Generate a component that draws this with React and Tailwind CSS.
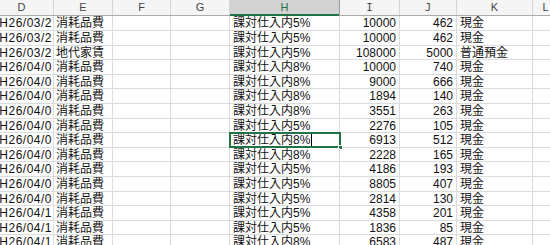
import { Fragment } from "react";

const rows = [
  ["H26/03/2", "消耗品費", "課対仕入内5%", "10000", "462", "現金"],
  ["H26/03/2", "消耗品費", "課対仕入内5%", "10000", "462", "現金"],
  ["H26/03/2", "地代家賃", "課対仕入内5%", "108000", "5000", "普通預金"],
  ["H26/04/0", "消耗品費", "課対仕入内8%", "10000", "740", "現金"],
  ["H26/04/0", "消耗品費", "課対仕入内8%", "9000", "666", "現金"],
  ["H26/04/0", "消耗品費", "課対仕入内8%", "1894", "140", "現金"],
  ["H26/04/0", "消耗品費", "課対仕入内8%", "3551", "263", "現金"],
  ["H26/04/0", "消耗品費", "課対仕入内5%", "2276", "105", "現金"],
  ["H26/04/0", "消耗品費", "課対仕入内8%", "6913", "512", "現金"],
  ["H26/04/0", "消耗品費", "課対仕入内8%", "2228", "165", "現金"],
  ["H26/04/0", "消耗品費", "課対仕入内5%", "4186", "193", "現金"],
  ["H26/04/0", "消耗品費", "課対仕入内5%", "8805", "407", "現金"],
  ["H26/04/0", "消耗品費", "課対仕入内5%", "2814", "130", "現金"],
  ["H26/04/1", "消耗品費", "課対仕入内5%", "4358", "201", "現金"],
  ["H26/04/1", "消耗品費", "課対仕入内5%", "1836", "85", "現金"],
  ["H26/04/1", "消耗品費", "課対仕入内8%", "6583", "487", "現金"],
];

const heights = ["h-[15px]", "h-[15px]", "h-[14px]", "h-[15px]", "h-[14px]"];

const SELECTED = 8;

function Cell({ className = "", children }) {
  return (
    <div
      className={`shrink-0 h-full border-r border-[#dadcdd] overflow-hidden whitespace-nowrap flex items-center ${className}`}
    >
      {children}
    </div>
  );
}

export default function App() {
  return (
    <div
      className="w-[550px] h-[245px] overflow-hidden bg-white text-[12px] text-[#111]"
      style={{ fontFamily: '"Liberation Sans", "Noto Sans CJK JP", sans-serif' }}
    >
      {/* column headers */}
      <div className="flex h-[16px] bg-[#f5f5f5] border-b border-[#ababab] text-[11px] text-[#444]">
        <div className="w-[54px] shrink-0 border-r border-[#d4d4d4] flex items-center justify-center">
          <span className="ml-[-10px]">D</span>
        </div>
        <div className="w-[59px] shrink-0 border-r border-[#d4d4d4] flex items-center justify-center">E</div>
        <div className="w-[58px] shrink-0 border-r border-[#d4d4d4] flex items-center justify-center">F</div>
        <div className="w-[59px] shrink-0 border-r border-[#d4d4d4] flex items-center justify-center">G</div>
        <div className="w-[110px] shrink-0 border-r border-[#9c9c9c] bg-[#d2d2d2] text-[#217346] flex items-center justify-center relative">
          H
          <div className="absolute left-0 right-0 bottom-[-1px] h-[2px] bg-[#217346]" />
        </div>
        <div className="w-[60px] shrink-0 border-r border-[#d4d4d4] flex items-center justify-center font-['DejaVu_Sans_Mono'] text-[10px]">I</div>
        <div className="w-[57px] shrink-0 border-r border-[#d4d4d4] flex items-center justify-center font-['DejaVu_Sans_Mono'] text-[10px]">J</div>
        <div className="w-[76px] shrink-0 border-r border-[#d4d4d4] flex items-center justify-center">K</div>
        <div className="flex-1 flex items-center justify-center pl-[8px]">L</div>
      </div>

      {/* data rows */}
      {rows.map((r, i) => (
        <div key={i} className={`flex border-b border-[#dadcdd] ${heights[i % 5]}`}>
          <Cell className="w-[54px] justify-end pr-[1px] tracking-[0.5px]">{r[0]}</Cell>
          <Cell className="w-[59px] pl-[2px]">{r[1]}</Cell>
          <Cell className="w-[58px]" />
          <Cell className="w-[59px]" />
          <div className="w-[110px] shrink-0 h-full relative">
            <div className="h-full border-r border-[#dadcdd] flex items-center pl-[3px] whitespace-nowrap">
              {r[2]}
              {i === SELECTED && <span className="inline-block w-px h-[12px] bg-black ml-px" />}
            </div>
            {i === SELECTED && (
              <Fragment>
                <div className="absolute left-[-1px] top-[-1px] right-[-1px] bottom-[-1px] border-2 border-[#217346]" />
                <div className="absolute right-[-3px] bottom-[-3px] w-[5px] h-[5px] bg-[#217346] border border-white" />
              </Fragment>
            )}
          </div>
          <Cell className="w-[60px] justify-end pr-[3px] overflow-visible">{r[3]}</Cell>
          <Cell className="w-[57px] justify-end pr-[3px]">{r[4]}</Cell>
          <Cell className="w-[76px] pl-[3px]">{r[5]}</Cell>
          <div className="flex-1" />
        </div>
      ))}
    </div>
  );
}
